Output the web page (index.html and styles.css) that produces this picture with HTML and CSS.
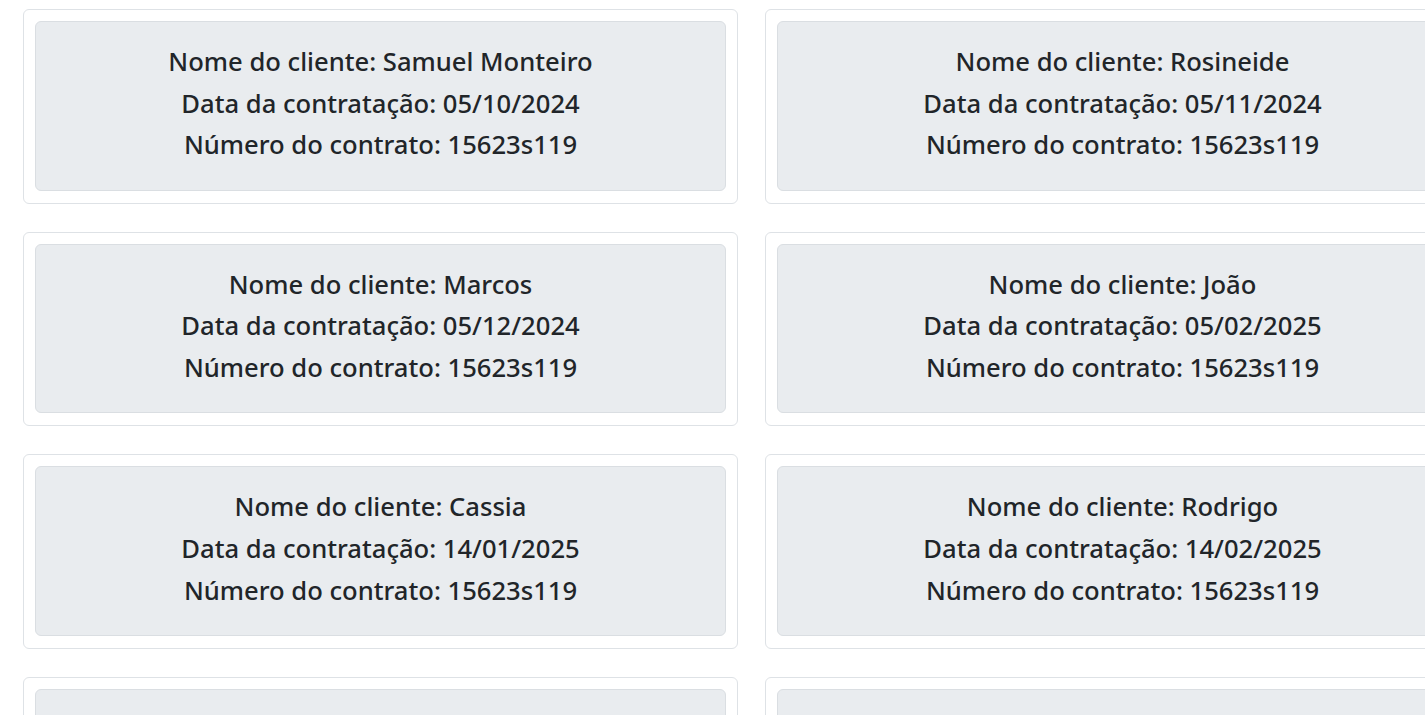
FILE: index.html
```html
<!DOCTYPE html>
<html lang="pt-BR">
<head>
<meta charset="utf-8">
<title>Contratos</title>
<link rel="stylesheet" href="styles.css">
</head>
<body>
<main class="grid">
  <div class="card"><div class="card-body">
    <h3>Nome do cliente: Samuel Monteiro</h3>
    <h3>Data da contratação: 05/10/2024</h3>
    <h3>Número do contrato: 15623s119</h3>
  </div></div>
  <div class="card"><div class="card-body">
    <h3>Nome do cliente: Rosineide</h3>
    <h3>Data da contratação: 05/11/2024</h3>
    <h3>Número do contrato: 15623s119</h3>
  </div></div>
  <div class="card"><div class="card-body">
    <h3>Nome do cliente: Marcos</h3>
    <h3>Data da contratação: 05/12/2024</h3>
    <h3>Número do contrato: 15623s119</h3>
  </div></div>
  <div class="card"><div class="card-body">
    <h3>Nome do cliente: João</h3>
    <h3>Data da contratação: 05/02/2025</h3>
    <h3>Número do contrato: 15623s119</h3>
  </div></div>
  <div class="card"><div class="card-body">
    <h3>Nome do cliente: Cassia</h3>
    <h3>Data da contratação: 14/01/2025</h3>
    <h3>Número do contrato: 15623s119</h3>
  </div></div>
  <div class="card"><div class="card-body">
    <h3>Nome do cliente: Rodrigo</h3>
    <h3>Data da contratação: 14/02/2025</h3>
    <h3>Número do contrato: 15623s119</h3>
  </div></div>
  <div class="card"><div class="card-body">
    <h3>Nome do cliente: Ana</h3>
    <h3>Data da contratação: 14/03/2025</h3>
    <h3>Número do contrato: 15623s119</h3>
  </div></div>
  <div class="card"><div class="card-body">
    <h3>Nome do cliente: Pedro</h3>
    <h3>Data da contratação: 14/04/2025</h3>
    <h3>Número do contrato: 15623s119</h3>
  </div></div>
</main>
</body>
</html>
```
FILE: styles.css
```css
html {
  overflow: hidden;
}
body {
  margin: 0;
  background: #fff;
  color: #212529;
  font-family: "Noto Sans", "Open Sans", sans-serif;
}
.grid {
  display: grid;
  grid-template-columns: 715px 715px;
  column-gap: 27px;
  row-gap: 28px;
  padding: 9px 0 0 23px;
  width: max-content;
}
.card {
  border: 1px solid #dee2e6;
  border-radius: 6px;
  padding: 11px 11px 12px;
  background: #fff;
}
.card-body {
  background: #e9ecef;
  border: 1px solid #dadee2;
  border-radius: 6px;
  padding: 23px 0 19.9px;
  text-align: center;
}
.card-body h3 {
  margin: 0 0 8px;
  font-size: 25.6px;
  font-weight: 500;
  line-height: 33.6px;
}
```
